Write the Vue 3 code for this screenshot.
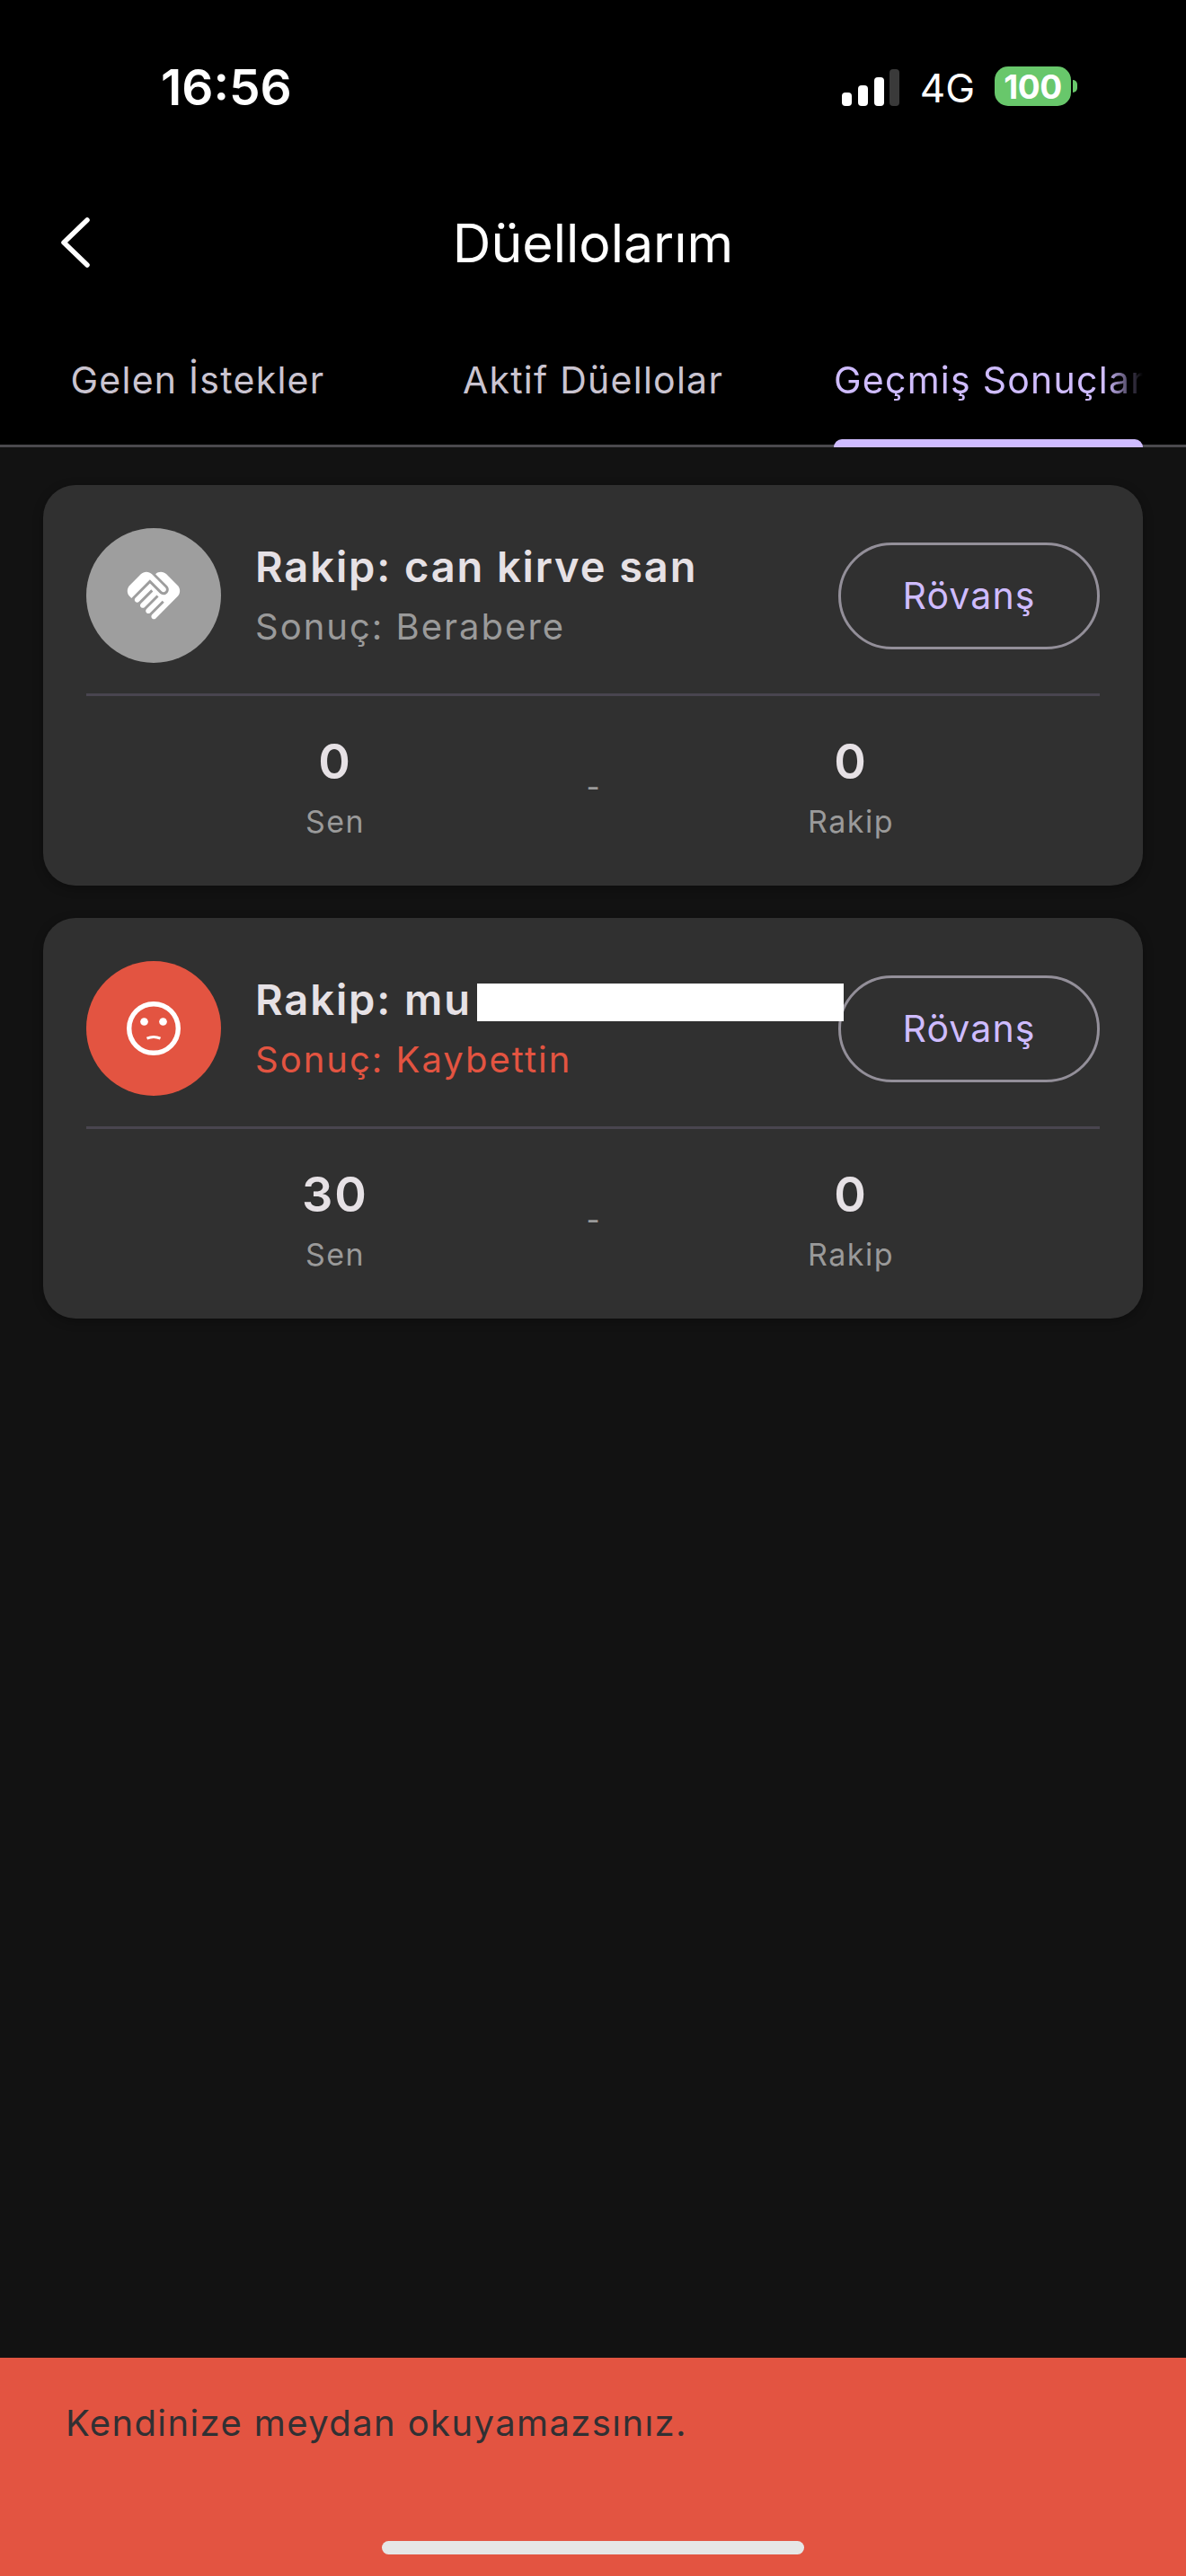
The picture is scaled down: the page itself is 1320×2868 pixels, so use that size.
<script setup>
const duels = [
  { name: 'Rakip: can kirve san', result: 'Sonuç: Berabere', you: 0, them: 0, kind: 'draw' },
  { name: 'Rakip: mu', result: 'Sonuç: Kaybettin', you: 30, them: 0, kind: 'loss', redacted: true },
]
</script>

<template>
  <div class="screen">
    <header class="top">
      <div class="status">
        <span class="time">16:56</span>
        <div class="indicators">
          <svg class="signal" width="64" height="41" viewBox="0 0 64 41">
            <rect x="0" y="26" width="11" height="15" rx="4" fill="#fff" />
            <rect x="18" y="18" width="11" height="23" rx="4" fill="#fff" />
            <rect x="36" y="9" width="11" height="32" rx="4" fill="#fff" />
            <rect x="53" y="0" width="11" height="41" rx="4" fill="#3a3a3a" />
          </svg>
          <span class="net">4G</span>
          <div class="battery"><span class="level">100</span><i class="nub"></i></div>
        </div>
      </div>
      <div class="titlebar">
        <svg class="back" width="36" height="58" viewBox="0 0 36 58">
          <path d="M31 4 L5 29 L31 54" fill="none" stroke="#fff" stroke-width="5.5" stroke-linecap="round" stroke-linejoin="round" />
        </svg>
        <h1 class="title">Düellolarım</h1>
      </div>
      <nav class="tabs">
        <div class="tab"><span class="tab-label">Gelen İstekler</span></div>
        <div class="tab"><span class="tab-label">Aktif Düellolar</span></div>
        <div class="tab active"><span class="tab-label">Geçmiş Sonuçlar</span><i class="indicator"></i></div>
      </nav>
    </header>

    <main class="list">
      <article v-for="d in duels" :key="d.name" class="card">
        <div class="row">
          <div class="avatar" :class="d.kind">
            <svg v-if="d.kind === 'draw'" width="70" height="70" viewBox="0 0 24 24" fill="#fff">
              <path d="M16.48 10.41c-.39.39-1.04.39-1.43 0l-4.47-4.46-7.05 7.04-.66-.63c-1.17-1.17-1.17-3.07 0-4.24l4.24-4.24c1.17-1.17 3.07-1.17 4.24 0L16.48 9c.39.39.39 1.02 0 1.41zm.7-2.12c.78.78.78 2.05 0 2.83-1.27 1.27-2.61.22-2.83 0l-3.76-3.76-5.57 5.57c-.39.39-.39 1.02 0 1.41.39.39 1.02.39 1.42 0l4.62-4.62.71.71-4.62 4.62c-.39.39-.39 1.02 0 1.41.39.39 1.02.39 1.42 0l4.62-4.62.71.71-4.62 4.62c-.39.39-.39 1.02 0 1.41.39.39 1.02.39 1.41 0l4.62-4.62.71.71-4.62 4.62c-.39.39-.39 1.02 0 1.41.39.39 1.02.39 1.41 0l8.32-8.34c1.17-1.17 1.17-3.07 0-4.24l-4.24-4.24c-1.15-1.15-3.01-1.17-4.18-.06l4.47 4.47z" />
            </svg>
            <svg v-else width="72" height="72" viewBox="0 0 24 24">
              <circle cx="12" cy="12" r="9.1" fill="none" stroke="#fff" stroke-width="1.8" />
              <circle cx="8.5" cy="9.5" r="1.45" fill="#fff" />
              <circle cx="15.5" cy="9.5" r="1.45" fill="#fff" />
              <path d="M9.5 15.7 Q12 14.6 14.5 15.7" fill="none" stroke="#fff" stroke-width="1" />
            </svg>
          </div>
          <div class="info">
            <div class="name">{{ d.name }}</div>
            <div class="result" :class="d.kind">{{ d.result }}</div>
          </div>
          <button class="rematch">Rövanş</button>
          <i v-if="d.redacted" class="redact"></i>
        </div>
        <div class="divider"></div>
        <div class="score">
          <div class="side"><b class="num">{{ d.you }}</b><span class="who">Sen</span></div>
          <span class="dash">-</span>
          <div class="side"><b class="num">{{ d.them }}</b><span class="who">Rakip</span></div>
        </div>
      </article>
    </main>

    <footer class="toast">
      <span class="toast-text">Kendinize meydan okuyamazsınız.</span>
      <i class="home"></i>
    </footer>
  </div>
</template>

<style scoped>
.screen {
  width: 1320px;
  height: 2868px;
  display: flex;
  flex-direction: column;
  background: #121212;
  font-family: Inter, "Noto Sans", sans-serif;
  overflow: hidden;
}
.top { background: #000; height: 498px; flex: none; display: flex; flex-direction: column; }
.status {
  height: 193px;
  flex: none;
  display: flex;
  justify-content: space-between;
  padding: 62px 128px 0 179px;
  box-sizing: border-box;
  color: #fff;
}
.time { font-size: 55px; font-weight: 600; line-height: 70px; letter-spacing: 0; }
.indicators { display: flex; align-items: flex-start; padding-top: 12px; }
.signal { margin-top: 3px; }
.net { font-size: 44px; line-height: 44px; margin: 2px 0 0 23px; font-weight: 400; }
.battery {
  position: relative;
  width: 85px;
  height: 44px;
  margin-left: 22px;
  border-radius: 15px;
  background: #68c76b;
  display: flex;
  align-items: center;
  justify-content: center;
}
.level { font-size: 37px; font-weight: 700; color: #fff; letter-spacing: -0.5px; }
.nub {
  position: absolute;
  right: -7px;
  top: 15px;
  width: 5px;
  height: 14px;
  border-radius: 0 7px 7px 0;
  background: #68c76b;
}
.titlebar { position: relative; height: 150px; flex: none; display: flex; align-items: center; justify-content: center; padding-top: 4px; box-sizing: border-box; }
.back { position: absolute; left: 66px; top: 48px; }
.title { margin: 0; font-size: 59px; font-weight: 400; color: #fff; letter-spacing: 0; }
.tabs {
  flex: 1;
  display: grid;
  grid-template-columns: repeat(3, 440px);
  border-bottom: 3px solid #4a494d;
}
.tab {
  position: relative;
  margin: 0 48px;
  display: flex;
  justify-content: center;
  padding-top: 52px;
  overflow: hidden;
  color: #cac4d0;
  white-space: nowrap;
}
.tab-label { font-size: 41px; line-height: 56px; font-weight: 400; letter-spacing: 1.25px; }
.tab.active { color: #cfbcff; justify-content: flex-start; overflow: visible; }
.tab.active .tab-label {
  display: block;
  width: 344px;
  overflow: hidden;
  -webkit-mask-image: linear-gradient(to right, #000 88%, transparent 100%);
  mask-image: linear-gradient(to right, #000 88%, transparent 100%);
}
.indicator {
  position: absolute;
  left: 0;
  right: 0;
  bottom: -3px;
  height: 9px;
  background: #cfbcff;
  border-radius: 9px 9px 0 0;
}
.list {
  flex: 1;
  padding: 42px 48px 0;
  display: flex;
  flex-direction: column;
  gap: 36px;
}
.card {
  height: 446px;
  box-sizing: border-box;
  padding: 48px 48px 0;
  background: #303030;
  border-radius: 36px;
  box-shadow: 0 3px 12px rgba(0, 0, 0, 0.3);
}
.row { position: relative; display: flex; align-items: center; height: 150px; }
.avatar {
  width: 150px;
  height: 150px;
  flex: none;
  border-radius: 50%;
  display: flex;
  align-items: center;
  justify-content: center;
}
.avatar.draw { background: #9e9e9e; }
.avatar.loss { background: #e35441; }
.info { flex: 1; margin-left: 38px; }
.name { font-size: 47px; line-height: 62px; font-weight: 600; color: #e6e1e5; letter-spacing: 1.9px; white-space: nowrap; }
.result { font-size: 40px; line-height: 56px; letter-spacing: 2px; margin-top: 8px; }
.result.draw { color: #9a9a9a; }
.result.loss { color: #e35441; }
.rematch {
  flex: none;
  width: 291px;
  height: 119px;
  box-sizing: border-box;
  background: transparent;
  border: 3px solid #938f99;
  border-radius: 60px;
  color: #cfbcff;
  font: 400 41px Inter, sans-serif;
  letter-spacing: 1.1px;
  padding: 0;
}
.redact { position: absolute; left: 435px; top: 25px; width: 408px; height: 42px; background: #fff; }
.divider { height: 3px; background: #49454f; margin-top: 34px; }
.score {
  display: grid;
  grid-template-columns: 1fr 20px 1fr;
  align-items: center;
  padding-top: 38px;
}
.side { display: flex; flex-direction: column; align-items: center; }
.num { font-size: 54px; line-height: 70px; font-weight: 600; color: #e6e1e5; letter-spacing: 2px; }
.who { font-size: 34px; line-height: 48px; color: #9a9a9a; letter-spacing: 1.5px; margin-top: 8px; }
.dash { font-size: 33px; line-height: 48px; color: #9a9a9a; text-align: center; }
.toast {
  position: relative;
  height: 243px;
  flex: none;
  background: #e35441;
  box-sizing: border-box;
  padding: 45px 73px 0;
}
.toast-text { font-size: 40px; line-height: 56px; color: #313033; letter-spacing: 1.4px; }
.home {
  position: absolute;
  left: 425px;
  top: 204px;
  width: 470px;
  height: 15px;
  border-radius: 8px;
  background: #e6e6e6;
}
</style>
